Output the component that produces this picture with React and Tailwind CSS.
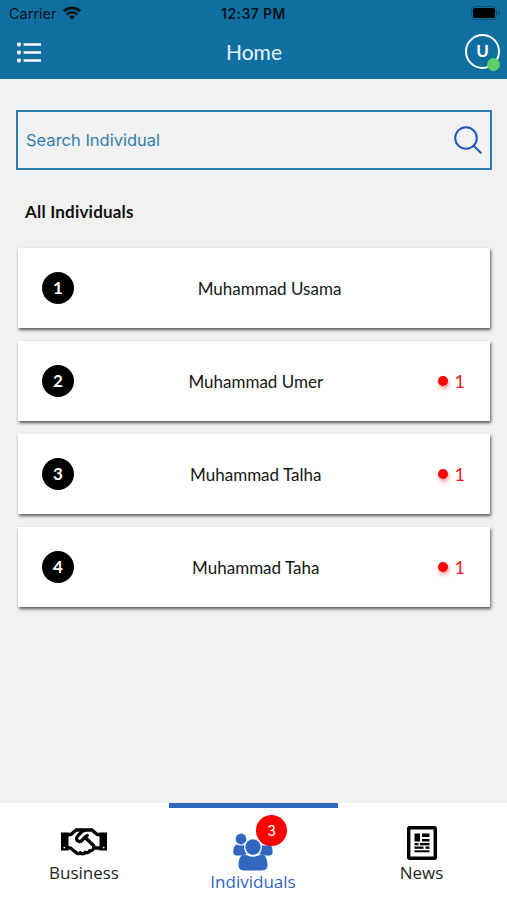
const individuals = [
  { id: 1, name: 'Muhammad Usama', unread: 0 },
  { id: 2, name: 'Muhammad Umer', unread: 1 },
  { id: 3, name: 'Muhammad Talha', unread: 1 },
  { id: 4, name: 'Muhammad Taha', unread: 1 },
];

function WifiIcon() {
  return (
    <svg width="18" height="14" viewBox="0 0 18 14" fill="none" stroke="#04141d" strokeWidth="2.7">
      <path d="M0.9 5.1a11.6 11.6 0 0 1 16.2 0" />
      <path d="M3.7 8.4a7.6 7.6 0 0 1 10.6 0" />
      <path d="M9 13.6 6.1 10.7a4.1 4.1 0 0 1 5.8 0z" fill="#04141d" stroke="none" />
    </svg>
  );
}

function BatteryIcon() {
  return (
    <svg width="29" height="14" viewBox="0 0 29 14">
      <rect x="0.5" y="0.5" width="25" height="13" rx="4" fill="none" stroke="#0a4d70" />
      <rect x="2" y="2" width="22" height="10" rx="2.5" fill="#000" />
      <path d="M27 5v4c1-.3 1.6-1.1 1.6-2S28 5.3 27 5z" fill="#0a4d70" />
    </svg>
  );
}

function MenuIcon() {
  return (
    <svg width="24" height="21" viewBox="0 0 24 21" fill="#fff">
      <circle cx="2" cy="2.5" r="2.1" />
      <circle cx="2" cy="10.5" r="2.1" />
      <circle cx="2" cy="18.5" r="2.1" />
      <rect x="6.5" y="1.2" width="17.5" height="2.6" rx="0.6" />
      <rect x="6.5" y="9.2" width="17.5" height="2.6" rx="0.6" />
      <rect x="6.5" y="17.2" width="17.5" height="2.6" rx="0.6" />
    </svg>
  );
}

function SearchIcon() {
  return (
    <svg width="28" height="28" viewBox="0 0 28 28" fill="none" stroke="#1c57bb" strokeWidth="2">
      <circle cx="12" cy="12" r="10.8" />
      <path d="m19.7 19.7 7 7" strokeLinecap="round" />
    </svg>
  );
}

function HandshakeIcon() {
  return (
    <svg width="46" height="28" viewBox="0 0 46 28" fill="none" stroke="#000" strokeWidth="3.3" strokeLinejoin="round">
      <path d="M0 4.500h7.500v18H0zM38.500 4.500H46v18h-7.500z" fill="#000" stroke="none" />
      <circle cx="3.3" cy="19.6" r="0.9" fill="#fff" stroke="none" />
      <circle cx="42.7" cy="19.6" r="0.9" fill="#fff" stroke="none" />
      <path d="M7 6.500h3l5-4.500h16l5 4.500h3" />
      <path d="M7 20h2.500l6.500 5.300c1.200.9 2.700.5 3.200-.7 1.400 1.700 4 1.500 5-.3 1.800 1 3.800.1 4.300-1.500 2 .3 3.700-.7 4-2.800H39" />
      <path d="M24.500 2.300c-2.500.2-3.700 1.200-4.700 2.300l-3.600 4.200c-1.200 1.500-.7 3.400.8 4.200 1.600.9 3.200.4 4.300-.8l2.700-3 9.500 9.300" />
      <path d="m23.500 9.700 2.700-2.300" strokeLinecap="round" />
    </svg>
  );
}

function GroupIcon() {
  return (
    <svg width="40" height="38" viewBox="0 0 40 38" fill="#3068c0">
      <circle cx="8" cy="6" r="5.4" />
      <circle cx="32" cy="6" r="5.4" />
      <path d="M4 11.500c1.300 1.200 6 1.300 7.700.2-1 4.300.2 7.400 2.300 9.300-2.500 0-4.500.9-5.800 1.500H3.500C1.300 22.500.3 21 .3 18.800c0-3 .9-6.800 3.700-7.300z" />
      <path d="M36 11.500c-1.300 1.200-6 1.300-7.700.2 1 4.300-.2 7.400-2.300 9.300 2.500 0 4.500.9 5.800 1.500h4.700c2.200 0 3.200-1.500 3.200-3.700 0-3-.9-6.800-3.700-7.300z" />
      <circle cx="20" cy="14" r="8.8" fill="#fff" />
      <circle cx="20" cy="14" r="7.7" />
      <path d="M12 21.300c3.500 3.100 12.500 3.100 16 0 4.700 0 6.500 5.500 6.500 11 0 3.300-2 5.200-5.200 5.200H10.700c-3.200 0-5.200-1.900-5.200-5.200 0-5.500 1.800-11 6.500-11z" />
    </svg>
  );
}

function NewsIcon() {
  return (
    <svg width="30" height="34" viewBox="0 0 30 34">
      <rect x="1.7" y="1.7" width="26.6" height="30.6" rx="1" fill="#fff" stroke="#000" strokeWidth="3.4" />
      <g fill="#000">
        <rect x="7.5" y="7.5" width="5.5" height="8" />
        <rect x="15" y="7.5" width="7.5" height="3.5" />
        <rect x="15" y="13" width="7.5" height="2.5" />
        <rect x="7.5" y="17" width="4" height="2.3" />
        <rect x="13" y="17" width="9.5" height="2.3" />
        <rect x="7.5" y="20.5" width="9" height="2.3" />
        <rect x="18.5" y="20.5" width="4" height="2.3" />
        <rect x="7.5" y="24.3" width="15" height="2" />
      </g>
    </svg>
  );
}

function Header() {
  return (
    <header className="h-[79px] bg-[#106fa1] shrink-0">
      <div className="h-7 grid grid-cols-3 items-center px-[9px] font-['Inter',sans-serif] text-[14px] text-[#04141d]">
        <div className="flex items-center gap-[6px]">
          <span className="text-[14.5px]">Carrier</span>
          <div className="-mt-[2px]"><WifiIcon /></div>
        </div>
        <span className="text-center font-semibold tracking-[0.4px] -mt-px">12:37 PM</span>
        <div className="flex justify-end -mt-[2px] -mr-[2px]"><BatteryIcon /></div>
      </div>
      <div className="h-12 grid grid-cols-3 items-center pl-[17px] pr-[7px]">
        <MenuIcon />
        <h1 className="text-center text-[21px] text-[#e7f5fc] pr-[9px]">Home</h1>
        <div className="relative justify-self-end -mt-[2px] size-[35px] rounded-full border-2 border-white flex items-center justify-center text-white text-[17px] font-bold">
          U
          <span className="absolute -right-[2px] -bottom-[4px] size-[13px] rounded-full bg-[#5fce63]" />
        </div>
      </div>
    </header>
  );
}

function PersonCard({ person }) {
  return (
    <li className="h-20 bg-white flex items-center pl-6 pr-[25px] shadow-[1px_2px_3px_rgba(0,0,0,0.65)]">
      <span className="size-8 rounded-full bg-black text-white text-[17px] font-bold flex items-center justify-center">{person.id}</span>
      <span className="flex-1 text-center text-[17px] text-[#161616] pt-px">{person.name}</span>
      {person.unread > 0 && (
        <span className="flex items-center gap-[7px] text-[18px] text-[#ed1c24]">
          <span className="size-[10px] rounded-full bg-[#fe0000] shadow-[1px_3px_4px_rgba(255,0,0,0.4)]" />
          {person.unread}
        </span>
      )}
    </li>
  );
}

function TabBar() {
  return (
    <nav className="h-[97px] bg-white grid grid-cols-3 shrink-0 font-['Open_Sans',sans-serif] text-[17px]">
      <div className="flex flex-col items-center pt-[25px] pr-px text-[#242424]">
        <HandshakeIcon />
        <span className="leading-6 mt-[5px]">Business</span>
      </div>
      <div className="flex flex-col items-center border-t-[5px] border-[#3068c0] text-[#3068c0] pt-[25px] pr-px">
        <div className="relative">
          <GroupIcon />
          <span className="absolute left-[23px] -top-[18px] size-[31px] rounded-full bg-[#fe0000] text-white text-[14px] font-['Inter',sans-serif] flex items-center justify-center">3</span>
        </div>
        <span className="leading-6 -mt-px">Individuals</span>
      </div>
      <div className="flex flex-col items-center pt-[23px] pr-[2px] text-[#242424]">
        <NewsIcon />
        <span className="leading-6 mt-px">News</span>
      </div>
    </nav>
  );
}

export default function App() {
  return (
    <div className="w-[507px] h-[900px] bg-[#f1f1f1] flex flex-col overflow-hidden font-['Lato',sans-serif]">
      <Header />
      <main className="flex-1 px-4 pt-[31px]">
        <div className="h-[60px] w-[476px] border-2 border-[#297da6] flex items-center justify-between px-2">
          <span className="text-[16.5px] text-[#3180ab] font-['Inter',sans-serif]">Search Individual</span>
          <SearchIcon />
        </div>
        <h2 className="mt-[30px] ml-[9px] text-[17px] leading-6 font-bold text-[#111] tracking-[0.2px]">All Individuals</h2>
        <ul className="mt-[24px] mx-[2px] w-[472px] flex flex-col gap-[13px]">
          {individuals.map(p => <PersonCard key={p.id} person={p} />)}
        </ul>
      </main>
      <TabBar />
    </div>
  );
}
